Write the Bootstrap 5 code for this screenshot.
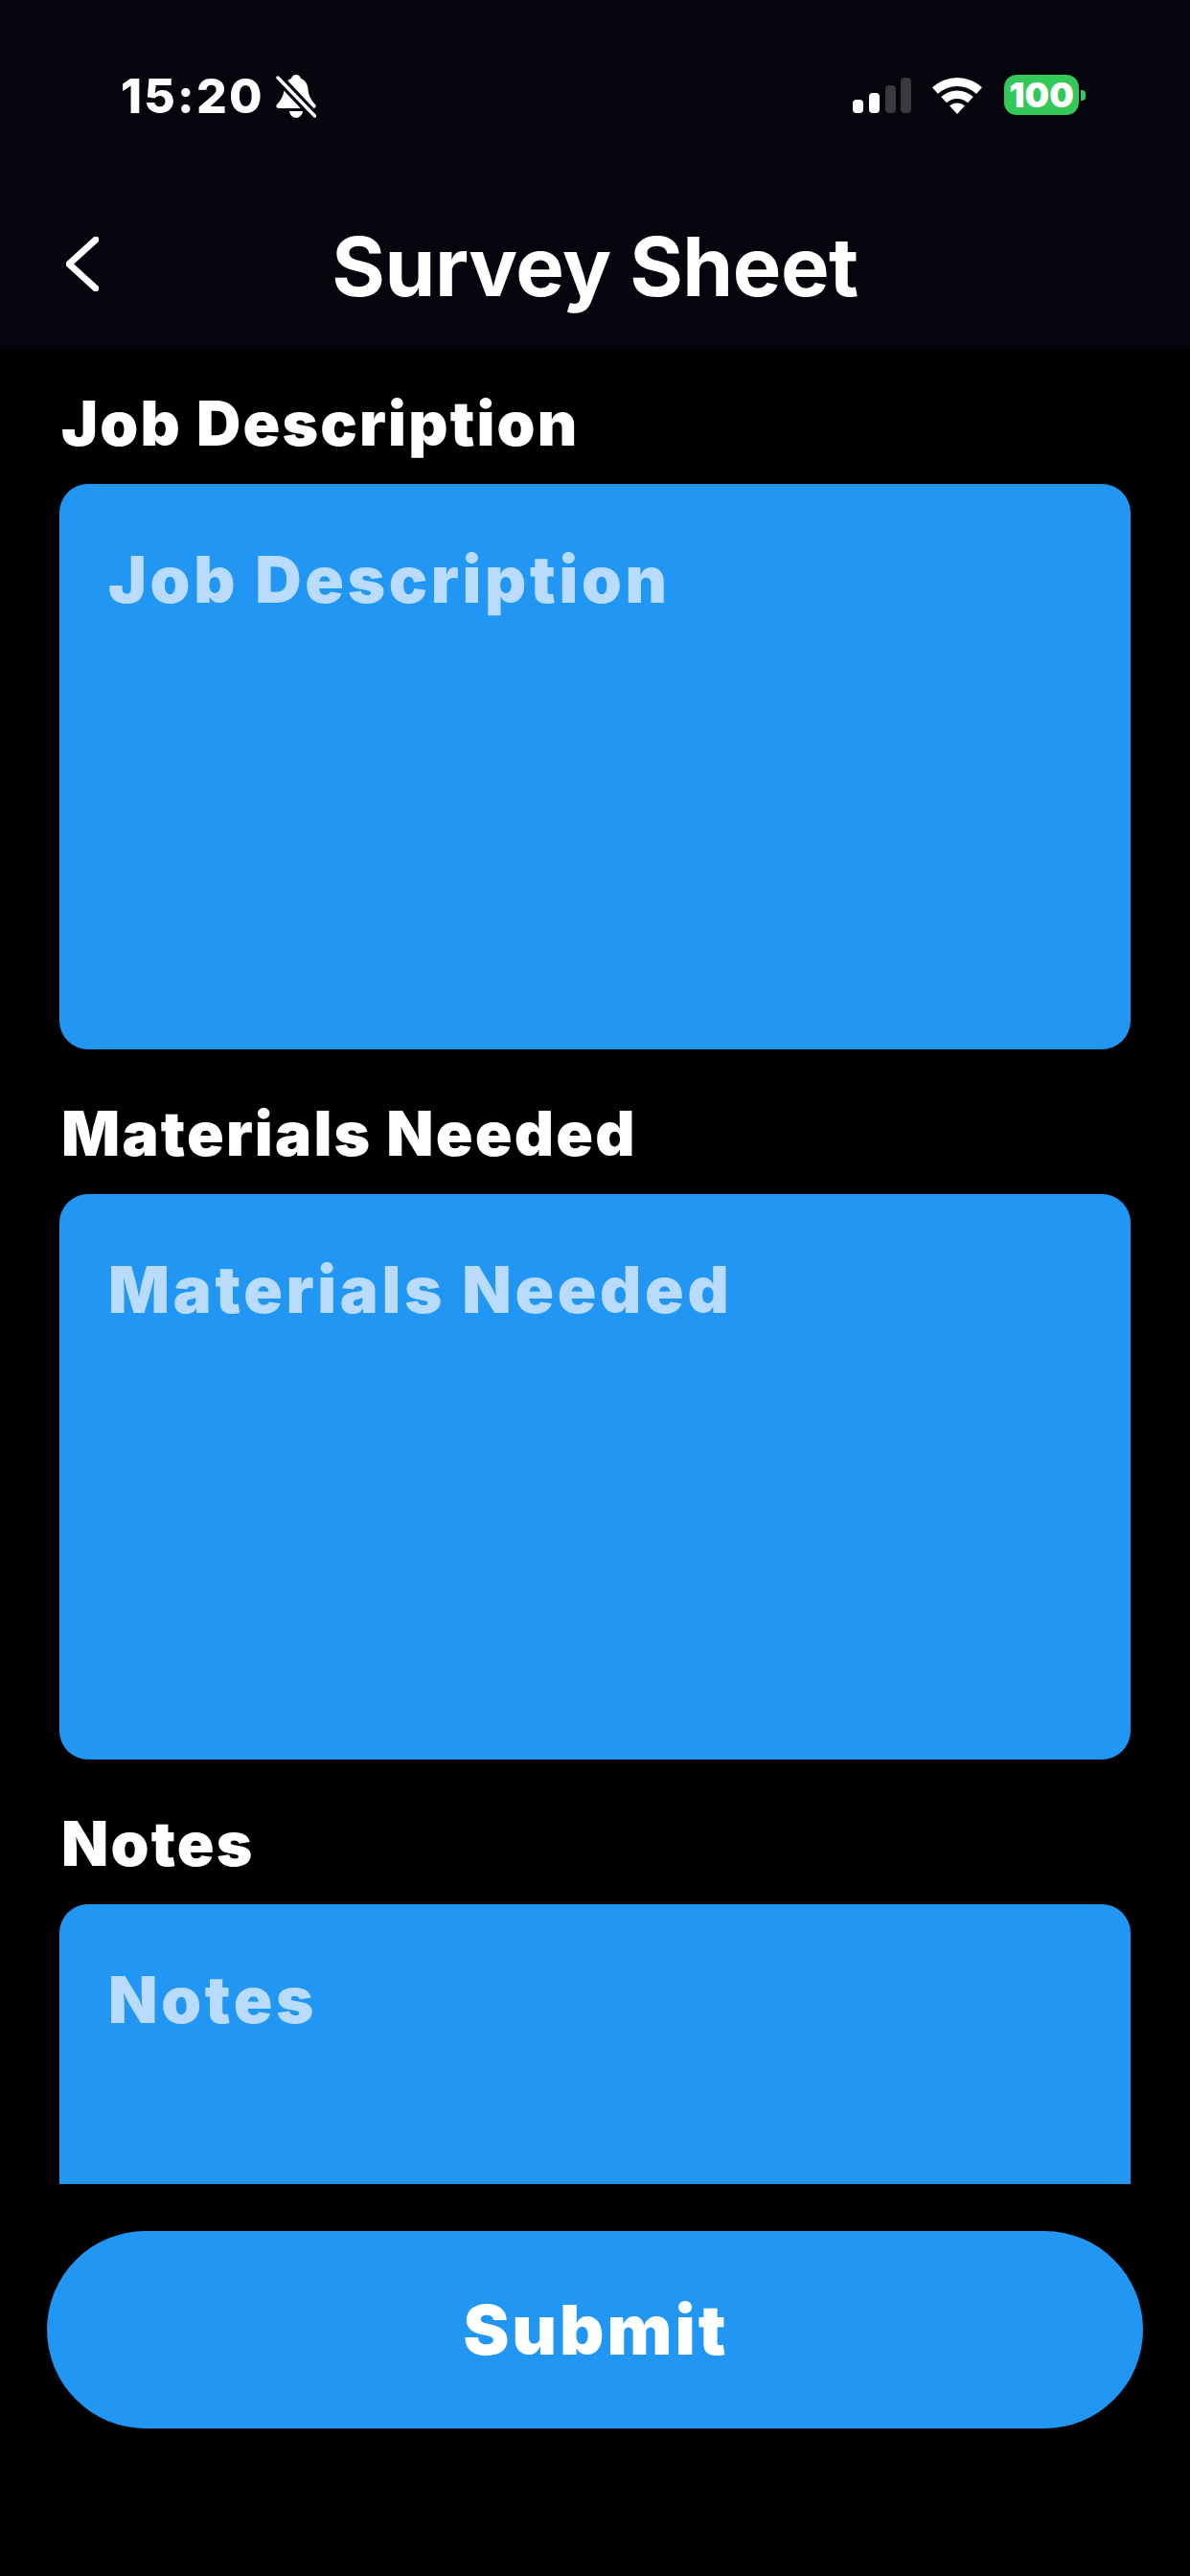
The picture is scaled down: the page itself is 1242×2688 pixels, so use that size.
<!DOCTYPE html>
<html lang="en">
<head>
<meta charset="utf-8">
<title>Survey Sheet</title>
<link rel="stylesheet" href="https://cdn.jsdelivr.net/npm/bootstrap@5.3.0/dist/css/bootstrap.min.css">
<style>
html, body { margin: 0; background: #000; }
body { width: 1242px; height: 2688px; overflow: hidden; font-family: Inter, "Liberation Sans", sans-serif; color: #fff; }
.top-area { background: #05060d; height: 363px; }
.status-row { height: 202px; padding: 78px 109px 0 126px; }
.clock-text { font-size: 50px; font-weight: 800; line-height: 45px; letter-spacing: 2.2px; }
.bell-icon { width: 42px; height: 45px; margin-left: 12px; }
.signal-icon { width: 61px; height: 38px; margin-top: 3px; }
.wifi-icon { width: 52px; height: 38px; margin: 3px 0 0 22px; }
.batt-wrap { margin-left: 23px; }
.batt-body { width: 78px; height: 42px; border-radius: 13px; background: #34c759; font-size: 36px; font-weight: 900; line-height: 42px; text-align: center; }
.batt-nub { width: 5px; height: 11px; margin-left: 2px; background: #34c759; border-radius: 0 4px 4px 0; }
.nav-row { display: grid; grid-template-columns: 1fr auto 1fr; align-items: center; height: 161px; padding: 0 0 0 69px; }
.back-icon { width: 34px; height: 57px; display: block; margin-top: -14px; }
.page-title { font-size: 85px; font-weight: 700; line-height: 100px; margin: -7px 0 0 -69px; letter-spacing: -.5px; }
.form-scroll { height: 1916px; overflow: hidden; padding: 0 62px; }
.field-label { display: block; font-size: 64px; font-weight: 900; line-height: 66px; letter-spacing: 2.2px; margin: 46px 0 0 2px; height: 96px; }
.field-box.form-control { height: 590px; border: 0; border-radius: 30px; background: #2196f3; color: #b9dcfe; font-size: 67px; font-weight: 900; line-height: 76px; letter-spacing: 3.7px; padding: 62px 51px; margin-bottom: 55px; }
.submit-pill.btn { display: block; width: 1144px; height: 206px; margin: 49px 0 0 49px; border: 0; border-radius: 103px; background: #2196f3; color: #fff; font-size: 72px; font-weight: 900; letter-spacing: 3px; padding: 0 0 0 2px; }
</style>
</head>
<body>
<div class="top-area">
  <div class="status-row d-flex align-items-start justify-content-between">
    <div class="d-flex align-items-start">
      <span class="clock-text">15:20</span>
      <svg class="bell-icon" viewBox="0 0 42 45" aria-hidden="true">
        <path fill="#fff" d="M21 0c3 0 4.500 2 5 4 5 2 7 6 7.500 11 .5 7 3 11 7.500 16 1.500 2 .5 4-2 4H3c-2.500 0-3.500-2-2-4 4.500-5 7-9 7.500-16C9 10 11 6 16 4c.5-2 2-4 5-4z"/>
        <path fill="#fff" d="M14 38h14c-.5 4-3.500 7-7 7s-6.500-3-7-7z"/>
        <path stroke="#05060d" stroke-width="10" d="M1 1.500 41 44"/>
        <path stroke="#fff" stroke-width="3.500" stroke-linecap="round" d="M2 3l38.500 40"/>
      </svg>
    </div>
    <div class="d-flex align-items-start">
      <svg class="signal-icon" viewBox="0 0 61 38" aria-hidden="true">
        <rect x="0" y="23" width="11" height="14" rx="4" fill="#fff"/>
        <rect x="17" y="16" width="11" height="21" rx="4" fill="#fff"/>
        <rect x="34" y="8" width="11" height="29" rx="4" fill="#3a3a3e"/>
        <rect x="50" y="0" width="11" height="37" rx="4" fill="#3a3a3e"/>
      </svg>
      <svg class="wifi-icon" viewBox="0 0 52 38" aria-hidden="true">
        <path fill="#fff" d="M0 10.300A38 38 0 0 1 52 10.300L46 16.900A29 29 0 0 0 6 16.900Z"/>
        <path fill="#fff" d="M9.200 20.100A24.500 24.500 0 0 1 42.800 20.100L37 26.300A16 16 0 0 0 15 26.300Z"/>
        <path fill="#fff" d="M18.100 29.600A11.500 11.500 0 0 1 33.900 29.600L26 38Z"/>
      </svg>
      <div class="batt-wrap d-flex align-items-center">
        <div class="batt-body">100</div>
        <div class="batt-nub"></div>
      </div>
    </div>
  </div>
  <div class="nav-row">
    <svg class="back-icon" viewBox="0 0 34 57" aria-hidden="true">
      <path d="M31 3 3 28.500 31 54" fill="none" stroke="#fff" stroke-width="7" stroke-linecap="round" stroke-linejoin="round"/>
    </svg>
    <h1 class="page-title">Survey Sheet</h1>
    <span></span>
  </div>
</div>
<form>
  <div class="form-scroll">
    <label class="field-label">Job Description</label>
    <div class="field-box form-control">Job Description</div>
    <label class="field-label">Materials Needed</label>
    <div class="field-box form-control">Materials Needed</div>
    <label class="field-label">Notes</label>
    <div class="field-box form-control">Notes</div>
  </div>
  <button type="button" class="submit-pill btn">Submit</button>
</form>
</body>
</html>
